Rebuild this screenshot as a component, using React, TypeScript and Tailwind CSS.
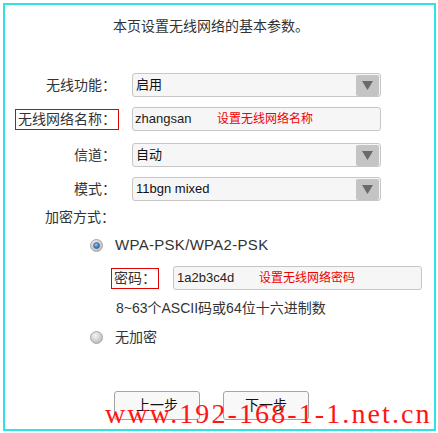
import React from "react";

const cjk = "font-['Liberation_Sans','Noto_Sans_CJK_SC',sans-serif]";

function Arrow() {
  return (
    <div className="mr-[1px] flex h-[21px] w-[23px] items-center justify-center rounded-[2px] bg-[#c4c4c4]">
      <svg width="11" height="9" viewBox="0 0 11 9">
        <path d="M0 0H11L5.5 9Z" fill="#6a6a6a" />
      </svg>
    </div>
  );
}

function Label({ text, boxed }: { text: string; boxed?: boolean }) {
  return (
    <span
      className={`inline-block border px-[2px] leading-[19px] text-[14px] text-[#333] ${
        boxed ? "border-[#e00000]" : "border-transparent"
      }`}
    >
      {text}
    </span>
  );
}

function Select({ value }: { value: string }) {
  return (
    <div className="ml-[13px] flex h-[24px] w-[249px] items-center justify-between rounded-[3px] border border-[#c6c6c6] bg-[#f6f6f6] pl-[3px] text-[13px] text-[#111]">
      <span>{value}</span>
      <Arrow />
    </div>
  );
}

function Radio({ checked }: { checked?: boolean }) {
  return (
    <svg width="13" height="13" viewBox="0 0 13 13">
      <defs>
        <radialGradient id={checked ? "rOn" : "rOff"} cx="40%" cy="35%" r="70%">
          <stop offset="0" stopColor="#f4f4f4" />
          <stop offset="1" stopColor="#b8b8b8" />
        </radialGradient>
        <radialGradient id="dot" cx="40%" cy="35%" r="70%">
          <stop offset="0" stopColor="#8ec2f0" />
          <stop offset="1" stopColor="#1d5fa8" />
        </radialGradient>
      </defs>
      <circle cx="6.5" cy="6.5" r="6" fill={`url(#${checked ? "rOn" : "rOff"})`} stroke="#a8a8a8" />
      {checked && <circle cx="6.5" cy="6.5" r="3" fill="url(#dot)" stroke="#2b4f7a" strokeWidth="0.6" />}
    </svg>
  );
}

export default function App() {
  return (
    <div className={`relative h-[433px] w-[438px] overflow-hidden bg-white p-[3px] ${cjk}`}>
      <div className="flex h-[428px] w-[433px] flex-col border-2 border-[#2fe3e3]">
        <div className="mt-[12px] h-[18px] pl-[108px] text-[14px] leading-[18px] text-[#333]">
          本页设置无线网络的基本参数。
        </div>

        <div className="mt-[38px] flex h-[24px] items-center">
          <div className="w-[114px] text-right">
            <Label text="无线功能：" />
          </div>
          <Select value="启用" />
        </div>

        <div className="mt-[10px] flex h-[24px] items-center">
          <div className="w-[114px] text-right">
            <Label text="无线网络名称：" boxed />
          </div>
          <div className="ml-[13px] flex h-[24px] w-[249px] items-center rounded-[3px] border border-[#c6c6c6] bg-[#f6f6f6] pl-[2px] text-[13px]">
            <span className="w-[82px] text-[#222]">zhangsan</span>
            <span className="text-[12px] text-[#f00000]">设置无线网络名称</span>
          </div>
        </div>

        <div className="mt-[12px] flex h-[24px] items-center">
          <div className="w-[114px] text-right">
            <Label text="信道：" />
          </div>
          <Select value="自动" />
        </div>

        <div className="mt-[10px] flex h-[24px] items-center">
          <div className="w-[114px] text-right">
            <Label text="模式：" />
          </div>
          <Select value="11bgn mixed" />
        </div>

        <div className="mt-[7px] flex h-[18px] items-center pl-[37px]">
          <Label text="加密方式：" />
        </div>

        <div className="mt-[10px] flex h-[18px] items-center pl-[85px]">
          <Radio checked />
          <span className="ml-[12px] text-[15px] tracking-[0.3px] text-[#333]">WPA-PSK/WPA2-PSK</span>
        </div>

        <div className="mt-[12px] flex h-[24px] items-center pl-[106px]">
          <Label text="密码：" boxed />
          <div className="ml-[14px] flex h-[24px] w-[249px] items-center rounded-[3px] border border-[#c6c6c6] bg-[#f6f6f6] pl-[3px] text-[13px]">
            <span className="w-[82px] text-[#222]">1a2b3c4d</span>
            <span className="text-[12px] text-[#f00000]">设置无线网络密码</span>
          </div>
        </div>

        <div className="mt-[9px] h-[18px] pl-[111px] text-[14px] leading-[18px] text-[#333]">
          8~63个ASCII码或64位十六进制数
        </div>

        <div className="mt-[11px] flex h-[18px] items-center pl-[85px]">
          <Radio />
          <span className="ml-[12px] text-[14px] text-[#333]">无加密</span>
        </div>

        <div className="mt-[45px] flex gap-[23px] pl-[109px]">
          <button className="h-[29px] w-[86px] rounded-[3px] border border-[#a4a4a4] bg-[#f8f8f8] text-[14px] text-[#111]">
            上一步
          </button>
          <button className="h-[29px] w-[86px] rounded-[3px] border border-[#a4a4a4] bg-[#f8f8f8] text-[14px] text-[#111]">
            下一步
          </button>
        </div>
      </div>

      <div className="absolute left-[105px] top-[398px] whitespace-nowrap font-['Liberation_Serif',serif] text-[28px] leading-[32px] tracking-[2.1px] text-[#ff1414]">
        www.192-168-1-1.net.cn
      </div>
    </div>
  );
}
